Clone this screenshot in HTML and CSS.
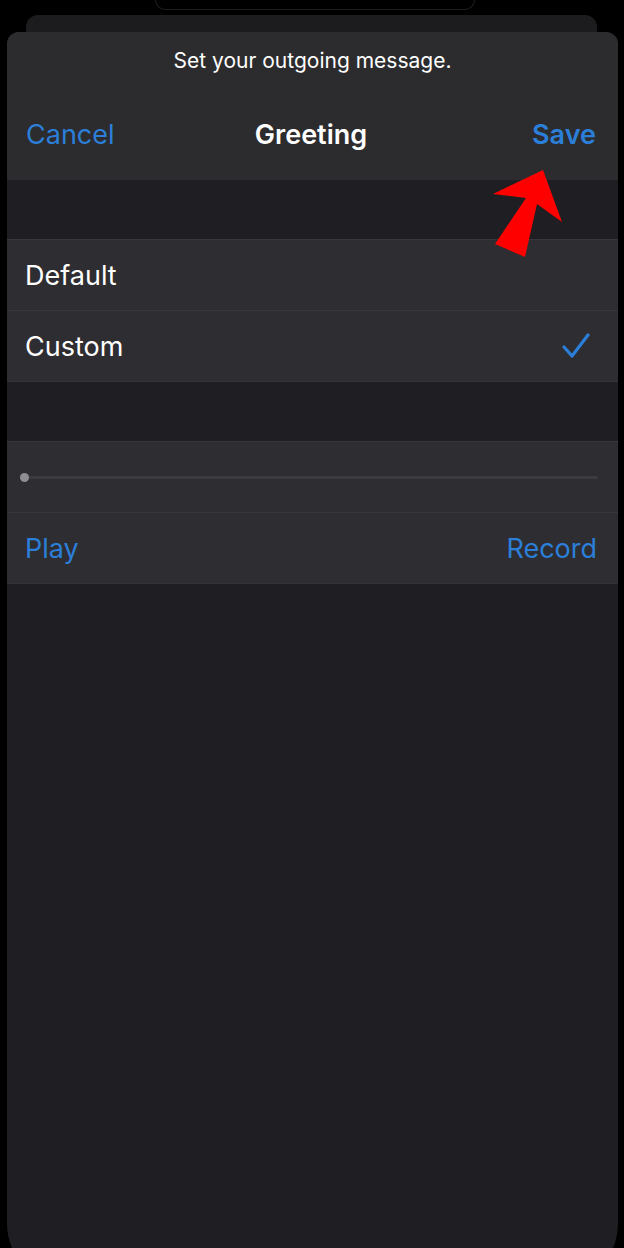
FILE: index.html
```html
<!DOCTYPE html>
<html>
  <head>
    <title>Greeting</title>
    <link rel="stylesheet" href="styles.css">
  </head>
  <body>
    <div class="screen">
      <div class="notch"></div>
      <div class="back-card"></div>
      <div class="sheet">
        <div class="header">
          <p class="subtitle">Set your outgoing message.</p>
          <div class="nav">
            <span class="nav-btn">Cancel</span>
            <span class="nav-title">Greeting</span>
            <span class="nav-btn bold">Save</span>
          </div>
        </div>

        <div class="group">
          <div class="row">
            <span>Default</span>
          </div>
          <div class="row">
            <span>Custom</span>
            <svg class="check" width="30" height="26" viewBox="0 0 30 26">
              <polyline points="3,14 11,23 27,2" fill="none" stroke="#2b7fd9" stroke-width="3.2" stroke-linecap="round" stroke-linejoin="round" />
            </svg>
          </div>
        </div>

        <div class="group">
          <div class="row slider-row">
            <div class="track">
              <div class="knob"></div>
            </div>
          </div>
          <div class="row">
            <span class="link">Play</span>
            <span class="link">Record</span>
          </div>
        </div>
      </div>

      <svg class="arrow" width="624" height="300" viewBox="0 0 624 300">
        <polygon points="543,170 493,194 526,198 495,244 525,257 537,204 562,222" fill="#ff0000" />
      </svg>
    </div>
  </body>
</html>
```

FILE: styles.css
```css
body {
  margin: 0;
  background: #000000;
  font-family: "Inter", "Liberation Sans", sans-serif;
  color: #ffffff;
}

.screen {
  position: relative;
  width: 624px;
  height: 1248px;
  overflow: hidden;
}

.notch {
  width: 318px;
  height: 9px;
  margin: 0 auto 0 155px;
  border: 1px solid #1e1e20;
  border-top: none;
  border-radius: 0 0 30px 30px;
}

.back-card {
  height: 17px;
  margin: 5px 27px 0 26px;
  background: #1c1c1e;
  border-radius: 12px 12px 0 0;
}

.sheet {
  margin: 0 6px 0 7px;
  height: 1256px;
  background: #1f1e22;
  border-radius: 12px 12px 65px 65px;
  overflow: hidden;
}

.header {
  height: 148px;
  background: #2c2c2e;
  display: flex;
  flex-direction: column;
}

.subtitle {
  margin: 16px 0 0;
  text-align: center;
  font-size: 21px;
  line-height: 26px;
}

.nav {
  display: grid;
  grid-template-columns: 1fr auto 1fr;
  align-items: center;
  padding: 0 22px 0 19px;
  margin-top: 44px;
  height: 32px;
}

.nav-btn {
  font-size: 27px;
  color: #2b7fd9;
}

.nav-btn.bold {
  font-weight: 600;
  text-align: right;
}

.nav-title {
  font-size: 27px;
  font-weight: 600;
  text-align: center;
}

.group {
  margin-top: 59px;
  background: #2e2d31;
  border-top: 1px solid #38373b;
}

.row {
  height: 70px;
  display: flex;
  align-items: center;
  justify-content: space-between;
  padding: 0 21px 0 18px;
  font-size: 27px;
  border-bottom: 1px solid #38373b;
}

.row:last-child {
  border-bottom: 1px solid #343337;
}

.check {
  margin-right: 6px;
}

.link {
  color: #2b7fd9;
}

.slider-row {
  padding: 0 20px 0 13px;
}

.track {
  flex: 1;
  height: 3px;
  border-radius: 2px;
  background: #3c3b40;
  display: flex;
  align-items: center;
}

.knob {
  width: 9px;
  height: 9px;
  border-radius: 50%;
  background: #8e8e93;
}

.arrow {
  position: absolute;
  left: 0;
  top: 0;
}
```
